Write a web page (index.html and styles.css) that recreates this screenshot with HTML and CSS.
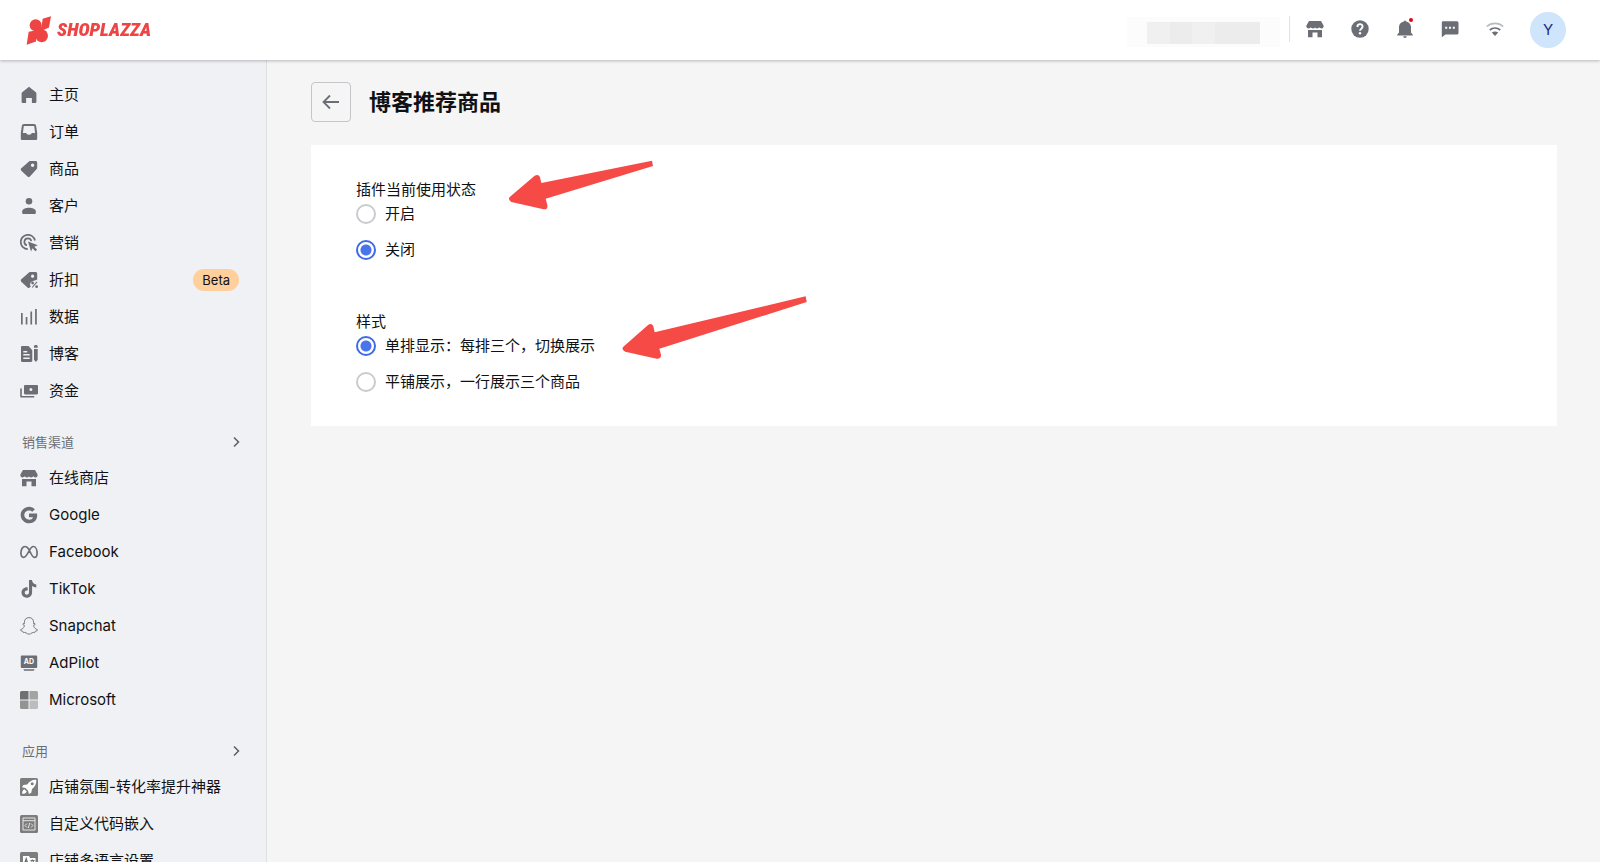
FILE: index.html
```html
<!DOCTYPE html>
<html lang="zh-CN">
<head>
    <meta charset="UTF-8">
    <meta name="viewport" content="width=device-width, initial-scale=1.0">
    <title>博客推荐商品</title>
    <link rel="stylesheet" href="styles.css">
</head>
<body>
    <!-- Top bar -->
    <header class="topbar">
        <a class="logo" href="#">
            <svg class="logo-mark" viewBox="78 45 78 92" aria-hidden="true">
                <circle cx="107" cy="75" r="18"/>
                <circle cx="125" cy="107" r="19"/>
                <path d="M153 48 L128 56 L125 78 L107 90 L107 106 L125 92 L147 82 Z"/>
                <path d="M80 134 L86 95 L110 90 L108 124 Z"/>
            </svg>
            <span class="logo-text">SHOPLAZZA</span>
        </a>
        <div class="topbar-right">
            <div class="store-name"><span></span></div>
            <nav class="tools">
                <button class="tool" aria-label="店铺">
                    <svg viewBox="0 0 18 18"><path d="M3 1h12l2.600 4.500c.3 2-.8 3-2.200 3-1 0-1.700-.5-2.100-1.200-.5.700-1.200 1.200-2.200 1.200-.9 0-1.600-.4-2.100-1.100-.5.700-1.200 1.100-2.100 1.100-1 0-1.700-.5-2.200-1.200C4.300 8 3.600 8.500 2.600 8.500c-1.400 0-2.500-1-2.200-3z"/><path d="M2 10h14v7.300h-4.500V12.500h-5v4.800H2z"/></svg>
                </button>
                <button class="tool" aria-label="帮助">
                    <svg viewBox="0 0 18 18"><circle cx="9" cy="9" r="8.700"/><path class="cut-line" d="M6.400 6.900c0-3.700 5.300-3.500 5.200-.3 0 2-2.600 2.100-2.600 4.200"/><circle class="cut" cx="9" cy="13.300" r="1.200"/></svg>
                </button>
                <button class="tool tool-bell" aria-label="通知">
                    <svg viewBox="0 0 18 18"><path d="M8 1.600a1 1 0 0 1 2 0C13 2 15 4.400 15 7.600v4.800l1.800 2.300v.8H1.200v-.8L3 12.400V7.600C3 4.400 5 2 8 1.600z"/><path d="M7.200 16.200h3.600a1.800 1.800 0 0 1-3.600 0z"/></svg>
                    <span class="dot"></span>
                </button>
                <button class="tool" aria-label="消息">
                    <svg viewBox="0 0 18 18"><path d="M2 1.200h14a1.500 1.500 0 0 1 1.500 1.500v10.200a1.500 1.500 0 0 1-1.500 1.500H4.500L.8 17.300V2.500A1.300 1.300 0 0 1 2 1.200z"/><path class="cut" d="M4.200 6.800h2v2h-2zM8 6.800h2v2H8zM11.800 6.800h2v2h-2z"/></svg>
                </button>
                <button class="tool" aria-label="网络">
                    <svg viewBox="0 0 18 18"><path class="line faint" d="M.8 6.500c4.500-4.300 11.900-4.300 16.400 0"/><path class="line" d="M3.800 10c3-2.700 7.400-2.700 10.400 0"/><path d="M5.800 12.600c2-1.400 4.400-1.400 6.400 0L9 16z"/></svg>
                </button>
            </nav>
            <button class="avatar">Y</button>
        </div>
    </header>

    <div class="layout">
        <!-- Sidebar menu -->
        <nav class="sidebar">
            <ul class="menu">
                <li><a href="#"><svg viewBox="0 0 18 18"><path d="M9 .8 15.800 6.200c.4.300.6.700.6 1.200v8.300c0 .8-.5 1.300-1.300 1.300h-3.200v-5H6.100v5H2.900c-.8 0-1.300-.5-1.300-1.300V7.400c0-.5.2-.9.6-1.200z"/></svg>主页</a></li>
                <li><a href="#"><svg viewBox="0 0 18 18"><path fill-rule="evenodd" d="M4 1h10c1.200 0 1.900.7 2.100 1.800L17.200 10v5.500c0 1-.6 1.600-1.600 1.600H2.400c-1 0-1.600-.6-1.600-1.600V10l1.100-7.200C2.100 1.700 2.800 1 4 1zM3.800 3 2.900 10h3c.7 0 .9 1.800 3.100 1.800S11.400 10 12.100 10h3l-.9-7z"/></svg>订单</a></li>
                <li><a href="#"><svg viewBox="0 0 18 18"><path fill-rule="evenodd" d="M10.300.9h5.200c1 0 1.700.7 1.700 1.700v5.200c0 .5-.1.9-.5 1.200l-6.800 7.400c-.7.7-1.700.7-2.400 0L1.300 10.700c-.7-.7-.7-1.700 0-2.400L9 1.400c.4-.4.8-.5 1.300-.5zM12.600 3.600a1.700 1.700 0 1 0 0 3.400 1.700 1.700 0 0 0 0-3.400z"/></svg>商品</a></li>
                <li><a href="#"><svg viewBox="0 0 18 18"><circle cx="9" cy="4.300" r="3.300"/><path d="M2.200 14.300c0-4.700 13.600-4.700 13.600 0v1.500c0 .8-.5 1.200-1.200 1.200H3.400c-.7 0-1.200-.4-1.200-1.200z"/></svg>客户</a></li>
                <li><a href="#"><svg viewBox="0 0 18 18"><path class="line" d="M15 6.500A7.200 7.200 0 1 0 7.800 15.200M11.300 7.200A3.500 3.500 0 1 0 7 11.300"/><path d="m8 7.500 9.800 3.700-3.500 1.500 2.800 3-1.700 1.600-2.900-3L11 17.600z"/></svg>营销</a></li>
                <li><a href="#"><svg viewBox="0 0 18 18"><path fill-rule="evenodd" d="M10.300.9h5.200c1 0 1.700.7 1.700 1.700v5.800c-1.700 1-5.500 1.400-6.700 3.300-.7 1.200-.4 2.600.3 3.900-.9 1.300-2.300 1.800-3.300.8L1.300 10.700c-.7-.7-.7-1.700 0-2.400L9 1.400c.4-.4.8-.5 1.300-.5zM12.600 3.600a1.600 1.600 0 1 0 0 3.200 1.600 1.600 0 0 0 0-3.200z"/><path class="line thin" d="m12.200 16.500 4.800-5.700"/><circle cx="12.600" cy="12" r="1.400"/><circle cx="16.600" cy="15.700" r="1.400"/></svg>折扣<span class="badge">Beta</span></a></li>
                <li><a href="#"><svg viewBox="0 0 18 18"><path d="M1 5h1.700v11.500H1zM5.700 9h1.700v7.500H5.700zM10.400 3.500h1.700v13h-1.700zM15.100 1h1.700v15.500h-1.700z"/></svg>数据</a></li>
                <li><a href="#"><svg viewBox="0 0 18 18"><path fill-rule="evenodd" d="M2.200 1h6.300l3.800 4.200v10.600c0 .7-.5 1.200-1.200 1.200H2.200C1.500 17 1 16.500 1 15.800V2.200C1 1.500 1.500 1 2.200 1zM3.300 6v1.400h4V6zM3.300 9v1.400h6.400V9zM3.300 12.500v1.400h6.400v-1.400z"/><path d="M14 1.300c0-1.600 3.700-1.600 3.700 0v1.500H14zM14 4h3.700v10.800L15.900 17 14 14.800z"/></svg>博客</a></li>
                <li><a href="#"><svg viewBox="0 0 18 18"><path fill-rule="evenodd" d="M5.200 3h11.600c.7 0 1.200.5 1.200 1.200v7c0 .7-.5 1.200-1.200 1.200H5.200c-.7 0-1.200-.5-1.200-1.200v-7C4 3.500 4.500 3 5.200 3zM10.900 6.100a1.500 1.500 0 1 0 0 3 1.500 1.500 0 0 0 0-3z"/><path d="M.2 6.500h1.600v7.400h12.400v1.600H1.200c-.6 0-1-.4-1-1z"/></svg>资金</a></li>
            </ul>

            <button class="section">销售渠道<svg viewBox="0 0 12 12"><path d="m4 1.500 4.500 4.500L4 10.500"/></svg></button>
            <ul class="menu">
                <li><a href="#"><svg viewBox="0 0 18 18"><path d="M3 1h12l2.600 4.500c.3 2-.8 3-2.200 3-1 0-1.700-.5-2.100-1.200-.5.700-1.200 1.200-2.200 1.200-.9 0-1.600-.4-2.100-1.100-.5.700-1.200 1.100-2.100 1.100-1 0-1.700-.5-2.200-1.200C4.300 8 3.600 8.500 2.600 8.500c-1.400 0-2.500-1-2.200-3z"/><path d="M2 10h14v7.300h-4.500V12.500h-5v4.800H2z"/></svg>在线商店</a></li>
                <li><a href="#"><svg viewBox="0 0 18 18"><path d="M14.900 3.300 12.300 5.700C9.500 3.100 4.300 4.700 4.300 9c0 4.500 6.800 6.700 8.900 2.200H9V7.600h8c1 5.400-2.200 9.700-7.700 9.700C4.500 17.300.7 13.600.7 9S4.500.7 9.200.7c2.200 0 4.200.9 5.700 2.600z"/></svg>Google</a></li>
                <li><a href="#"><svg viewBox="0 0 18 18"><path class="line" d="M9 6.500C7.500 4 6.300 3.500 5 3.500c-2.500 0-4.100 3.200-4.100 6.600 0 2.800 1 4.300 2.700 4.300 2 0 3.200-2.200 5.400-6.300C10.700 4.900 11.700 3.500 13.300 3.500c2.300 0 3.800 3.200 3.800 6.700 0 2.700-1 4.200-2.600 4.200-1.900 0-3.200-2.500-5.500-7.900"/></svg>Facebook</a></li>
                <li><a href="#"><svg viewBox="0 0 18 18"><path d="M9 0h3c.2 2.600 1.700 4.200 4.300 4.400v3.100c-1.600 0-3-.5-4.200-1.400v6.200c0 3.400-2.400 5.500-5.300 5.500-3 0-5.300-2.300-5.300-5.200 0-3.200 2.800-5.600 6.200-5.200v3.200c-1.700-.5-3 .6-3 2 0 1.200.9 2.100 2.100 2.100 1.300 0 2.200-.9 2.200-2.400z"/></svg>TikTok</a></li>
                <li><a href="#"><svg viewBox="0 0 18 18"><path class="line hair" d="M9 .6c-3 0-4.600 2-4.600 4.700v1.500l-1.400-.2c-.7.5-.1 1.200 1.300 1.700.5.700-1 3.700-3.800 4.500 0 1 1.300 1.300 2.300 1.500l.5 1.300c1-.2 1.900-.3 2.700.2.9.6 1.700 1.400 3 1.400s2.100-.8 3-1.400c.8-.5 1.700-.4 2.700-.2l.5-1.300c1-.2 2.300-.5 2.300-1.500-2.800-.8-4.300-3.800-3.800-4.500 1.400-.5 2-1.200 1.300-1.700l-1.400.2V5.300C13.600 2.600 12 .6 9 .6z"/></svg>Snapchat</a></li>
                <li><a href="#"><svg viewBox="0 0 18 18"><path d="M2 1.400h14c.8 0 1.200.4 1.200 1.200v10.200c0 .8-.4 1.200-1.200 1.200H2c-.8 0-1.200-.4-1.200-1.200V2.600c0-.8.4-1.200 1.200-1.200zM3.300 15.300h11.400l-1 1.500H4.300z"/><text class="ad-text" x="9" y="10" text-anchor="middle">AD</text></svg>AdPilot</a></li>
                <li><a href="#"><svg viewBox="0 0 18 18"><path class="ms-1" d="M1.500 0h7v8.500H0v-7Q0 0 1.500 0z"/><path class="ms-2" d="M9.500 0h7Q18 0 18 1.500v7H9.500z"/><path class="ms-3" d="M0 9.500h8.500V18h-7Q0 18 0 16.500z"/><path class="ms-4" d="M9.500 9.500H18v7q0 1.500-1.500 1.500h-7z"/></svg>Microsoft</a></li>
            </ul>

            <button class="section">应用<svg viewBox="0 0 12 12"><path d="m4 1.500 4.500 4.500L4 10.500"/></svg></button>
            <ul class="menu">
                <li><a href="#"><svg viewBox="0 0 18 18"><rect class="app" width="18" height="18" rx="1.500"/><path class="cut" fill-rule="evenodd" d="M16.300 1.700c.3 4-1.300 7-4.300 9.300l-.7 3.800-2.400 1.300-.8-3.400-2.700-2.600-3.500-.8 1.500-2.300 3.700-.6c2.400-3.200 5.200-4.900 9.200-4.700zM12.200 4.300a1.500 1.500 0 1 0 0 3 1.500 1.500 0 0 0 0-3zM4.400 11.300l2.300 2.300c-.9 1.800-2.300 2.500-4.500 2.200-.2-2 .4-3.500 2.200-4.500z"/></svg>店铺氛围-转化率提升神器</a></li>
                <li><a href="#"><svg viewBox="0 0 18 18"><rect class="app" width="18" height="18" rx="1.500"/><path class="app-line" d="M3 3h12v12H3zM3 5.700h12M7 8.500l-2 2 2 2M11 8.500l2 2-2 2M9.700 8l-1.400 5"/></svg>自定义代码嵌入</a></li>
                <li><a href="#"><svg viewBox="0 0 18 18"><rect class="app" width="18" height="18" rx="1.500"/><path class="cut" d="M3 4h6l1 2h5.500v9H10l-1-2H3z"/><path class="line thin" d="m4.700 11 1.500-4.500L7.700 11M5 9.500h2.500M10.500 8.500h4M12.500 7.500v1M11 12.500l3-4M11 9.500l3 3.500"/></svg>店铺多语言设置</a></li>
            </ul>
        </nav>

        <!-- Page content -->
        <main class="content">
            <div class="page-head">
                <button class="back" aria-label="返回">
                    <svg viewBox="0 0 18 18"><path d="M17 9H1.500M8 2.500 1.500 9 8 15.500"/></svg>
                </button>
                <h1>博客推荐商品</h1>
            </div>

            <form class="card">
                <fieldset>
                    <legend>插件当前使用状态</legend>
                    <label><input type="radio" name="status" value="on">开启</label>
                    <label><input type="radio" name="status" value="off" checked>关闭</label>
                </fieldset>
                <fieldset>
                    <legend>样式</legend>
                    <label><input type="radio" name="style" value="single" checked>单排显示：每排三个，切换展示</label>
                    <label><input type="radio" name="style" value="tile">平铺展示，一行展示三个商品</label>
                </fieldset>

                <svg class="arrow arrow-status" viewBox="621 264 444 156" aria-hidden="true"><path d="M1056 272 L1059 288 L737 386 L742 405 Q744 419 731 418 L634 396 Q622 388 630 380 L704 317 Q716 311 720 322 L724 339 Z"/></svg>
                <svg class="arrow arrow-style" viewBox="840 45 567 198" aria-hidden="true"><path d="M1397 49 L1400 66 L958 206 L963 224 Q964 237 950 236 L856 215 Q843 210 850 200 L925 134 Q936 129 940 139 L944 157 Z"/></svg>
            </form>
        </main>
    </div>
</body>
</html>
```
FILE: styles.css
```css
/* General */
* {
    margin: 0;
    padding: 0;
    box-sizing: border-box;
}

body {
    display: flex;
    flex-direction: column;
    height: 100vh;
    overflow: hidden;
    font-family: Inter, "Noto Sans CJK SC", sans-serif;
    font-size: 15px;
    line-height: 24px;
    color: #101114;
    background: #f5f5f5;
}

button {
    border: none;
    background: none;
    font: inherit;
    color: inherit;
    cursor: pointer;
}

a {
    color: inherit;
    text-decoration: none;
}

svg {
    display: block;
    flex: none;
    fill: #6b6e75;
}

.line {
    fill: none;
    stroke: #6b6e75;
    stroke-width: 1.7;
}

.thin {
    stroke-width: 1.1;
}

.hair {
    stroke-width: 0.9;
}

.faint {
    stroke: #b9bbbf;
}

.cut {
    fill: #fff;
}

.cut-line {
    fill: none;
    stroke: #fff;
    stroke-width: 1.9;
}

/* Top bar */
.topbar {
    position: relative;
    z-index: 1;
    display: flex;
    flex: none;
    align-items: center;
    justify-content: space-between;
    height: 60px;
    padding: 0 34px 0 26px;
    background: #fff;
    box-shadow: 0 1px 3px rgba(0, 0, 0, 0.25);
}

.logo {
    display: flex;
    align-items: center;
    gap: 5px;
}

.logo-mark {
    width: 26px;
    height: 31px;
    fill: #ee4444;
}

.logo-text {
    font-family: "Roboto Condensed", "Liberation Sans Narrow", "Liberation Sans", sans-serif;
    font-size: 19px;
    font-weight: 900;
    font-style: italic;
    color: #ee4444;
}

.topbar-right {
    display: flex;
    align-items: center;
}

.store-name {
    width: 153px;
    height: 30px;
    padding: 5px 20px 3px;
    margin: 4px 9px 0 0;
    background: #fcfcfc;
}

.store-name span {
    display: block;
    height: 22px;
    background: linear-gradient(90deg, #f0f0f0 20%, #ececec 20% 40%, #f0f0f0 40% 60%, #ececec 60%);
}

.tools {
    display: flex;
    align-items: center;
    gap: 27px;
    height: 26px;
    padding: 0 26px 0 16px;
    margin-bottom: 2px;
    border-left: 1px solid #e1e2e4;
}

.tool svg {
    width: 18px;
    height: 18px;
}

.tool-bell {
    position: relative;
}

.dot {
    position: absolute;
    top: -2px;
    right: 1px;
    width: 4px;
    height: 4px;
    border-radius: 50%;
    background: #e30613;
}

.avatar {
    width: 36px;
    height: 36px;
    border-radius: 50%;
    background: #cfe5fb;
    color: #1f2d8a;
}

.layout {
    display: flex;
    flex: 1;
    min-height: 0;
}

/* Sidebar */
.sidebar {
    flex: none;
    width: 267px;
    padding-top: 16px;
    overflow-y: auto;
    scrollbar-width: none;
    background: #f0f1f4;
    border-right: 1px solid #dfe0e3;
}

.menu {
    list-style: none;
}

.menu a {
    display: flex;
    align-items: center;
    gap: 11px;
    height: 37px;
    padding: 0 27px 0 20px;
}

.menu svg {
    width: 18px;
    height: 18px;
}

.badge {
    margin-left: auto;
    padding: 0 9px;
    border-radius: 11px;
    font-size: 13px;
    line-height: 22px;
    background: #ffd09b;
}

.section {
    display: flex;
    align-items: center;
    justify-content: space-between;
    width: 100%;
    height: 34px;
    margin-top: 16px;
    padding: 0 24px 0 22px;
    font-size: 13px;
    color: #6b6e75;
}

.section svg {
    width: 12px;
    height: 12px;
    fill: none;
    stroke: #5c5f66;
    stroke-width: 1.5;
}

.ad-text {
    font-size: 7px;
    font-weight: 700;
    fill: #fff;
}

.ms-1 {
    fill: #707070;
}

.ms-2 {
    fill: #a3a3a3;
}

.ms-3 {
    fill: #939393;
}

.ms-4 {
    fill: #bcbcbc;
}

.app {
    fill: #7d7d7d;
}

.app-line {
    fill: none;
    stroke: #e6e6e6;
    stroke-width: 1;
}

/* Content */
.content {
    flex: 1;
    padding: 22px 43px 0 44px;
}

.page-head {
    display: flex;
    align-items: center;
    gap: 18px;
    margin-bottom: 23px;
}

.back {
    display: flex;
    align-items: center;
    justify-content: center;
    width: 40px;
    height: 40px;
    border: 1px solid #c4c6ca;
    border-radius: 4px;
}

.back svg {
    width: 18px;
    height: 18px;
    fill: none;
    stroke: #6b6e75;
    stroke-width: 1.8;
}

h1 {
    font-size: 22px;
    line-height: 32px;
    font-weight: 600;
}

.card {
    position: relative;
    padding: 33px 45px 32px;
    background: #fff;
}

fieldset {
    border: none;
}

fieldset + fieldset {
    margin-top: 48px;
}

label {
    display: flex;
    align-items: center;
    gap: 9px;
}

label + label {
    margin-top: 12px;
}

input[type="radio"] {
    appearance: none;
    width: 20px;
    height: 20px;
    border: 2px solid #c9cbcf;
    border-radius: 50%;
    background: #fff;
}

input[type="radio"]:checked {
    border-color: #3e6be8;
    background: radial-gradient(circle, #4a74ec 5px, #fff 6px);
}

.arrow {
    position: absolute;
    fill: #f54a45;
}

.arrow-status {
    left: 196px;
    top: 13px;
    width: 148px;
    height: 52px;
}

.arrow-style {
    left: 309px;
    top: 150px;
    width: 189px;
    height: 66px;
}
```
